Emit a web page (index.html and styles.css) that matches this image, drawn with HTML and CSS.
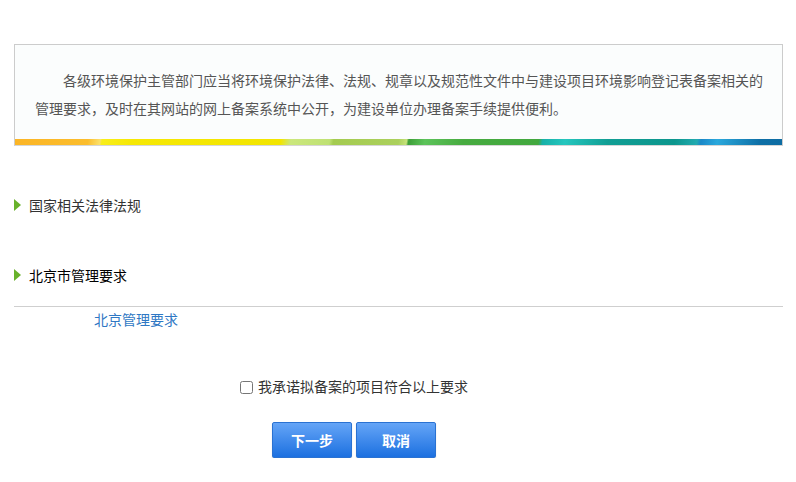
FILE: index.html
```html
<!DOCTYPE html>
<html lang="zh-CN">
<head>
    <meta charset="UTF-8">
    <meta name="viewport" content="width=device-width, initial-scale=1.0">
    <title>备案须知</title>
    <link rel="stylesheet" href="styles.css">
</head>
<body>
    <div class="page">
        <div class="notice">
            <p class="notice-text">各级环境保护主管部门应当将环境保护法律、法规、规章以及规范性文件中与建设项目环境影响登记表备案相关的管理要求，及时在其网站的网上备案系统中公开，为建设单位办理备案手续提供便利。</p>
            <div class="color-bar"></div>
        </div>

        <div class="section">
            <h3 class="section-title">国家相关法律法规</h3>
        </div>

        <div class="section section-active">
            <h3 class="section-title">北京市管理要求</h3>
        </div>
        <div class="links">
            <a href="#" class="req-link">北京管理要求</a>
        </div>

        <div class="agree">
            <label><input type="checkbox" id="chkAgree"> 我承诺拟备案的项目符合以上要求</label>
        </div>
        <div class="actions">
            <button class="btn">下一步</button>
            <button class="btn">取消</button>
        </div>
    </div>
</body>
</html>
```

FILE: styles.css
```css
/* 页面基础 */
body {
    margin: 0;
    font-family: "Noto Sans CJK SC", "Liberation Sans", sans-serif;
    font-size: 14px;
    color: #333;
    background: #fff;
}
.page {
    padding: 44px 13px 0 14px;
}

/* 顶部说明框 */
.notice {
    border: 1px solid #cccccc;
    border-bottom-color: #d6d6d6;
    background: #fbfdfd;
}
.notice-text {
    margin: 0;
    padding: 21px 16px 17px 20px;
    line-height: 28px;
    text-indent: 2em;
    color: #555;
}
.color-bar {
    height: 6px;
    background: linear-gradient(100deg,
        #fbb526 0, #fbbd2c 72px, #fbe06a 84px,
        #f8ee1a 86px, #f6e804 116px, #f2e500 262px,
        #cbe77c 272px, #bfe173 310px, #a4cb50 314px, #abd05c 378px, #c5e27a 386px,
        #3d9f38 388px, #5cc35a 404px, #47ab40 442px, #42a83e 516px,
        #17b0a8 520px, #25c6be 542px, #119e94 584px, #0c968d 650px, #22aab0 672px,
        #1a88c8 676px, #2aa8dc 692px, #0e6fa6 734px, #0d6aa0 769px);
}

/* 分类标题 */
.section {
    margin-top: 48px;
}
.section + .section {
    margin-top: 48px;
}
.section-title {
    margin: 0;
    padding-left: 15px;
    position: relative;
    font-size: 14px;
    font-weight: normal;
    line-height: 22px;
    color: #333;
}
.section-title:before {
    content: "";
    position: absolute;
    left: 0;
    top: 5px;
    border-style: solid;
    border-width: 6px 0 6px 7px;
    border-color: transparent transparent transparent #68b22b;
}
.section-active .section-title {
    color: #000;
}

/* 链接列表 */
.links {
    margin-top: 20px;
    border-top: 1px solid #cfcfcf;
    padding: 1px 0 0 80px;
    line-height: 22px;
}
.req-link {
    color: #2f78c4;
    text-decoration: none;
}

/* 承诺与按钮 */
.agree {
    width: 680px;
    margin-top: 45px;
    text-align: center;
    line-height: 22px;
}
.agree input {
    margin: 0 2px 0 0;
    width: 13px;
    height: 13px;
    vertical-align: -2px;
}
.actions {
    width: 680px;
    margin-top: 25px;
    text-align: center;
    font-size: 0;
}
.btn {
    width: 80px;
    height: 36px;
    margin: 0 2px;
    border: 1px solid #2a72d2;
    border-radius: 2px;
    background: linear-gradient(#65a5f7, #1c70e0);
    box-shadow: 0 1px 1px rgba(0, 0, 0, 0.25);
    color: #fff;
    font-family: "Noto Sans CJK SC", sans-serif;
    font-size: 14px;
    font-weight: bold;
    cursor: pointer;
}
```
